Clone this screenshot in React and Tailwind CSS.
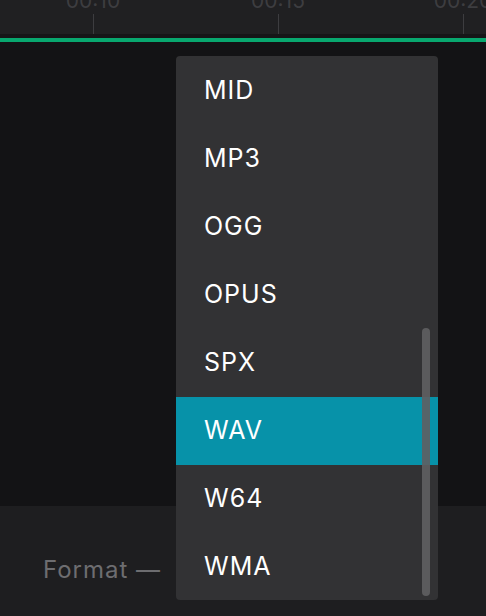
import React from "react";

const items = ["MID", "MP3", "OGG", "OPUS", "SPX", "WAV", "W64", "WMA"];

function Tick({ x, label }) {
  return (
    <>
      <span
        className="absolute top-[-10px] w-[80px] text-center text-[21px] leading-none text-[#3d3d40]"
        style={{ left: x - 40 }}
      >
        {label}
      </span>
      <div className="absolute top-[14px] w-[1px] h-[20px] bg-[#3d3d40]" style={{ left: x }} />
    </>
  );
}

export default function App() {
  return (
    <div
      className="relative w-[486px] h-[616px] overflow-hidden flex flex-col bg-[#131315]"
      style={{ fontFamily: "Inter, 'Noto Sans', sans-serif" }}
    >
      <div className="h-[34px] bg-[#202022] relative overflow-hidden">
        <Tick x={93} label="00:10" />
        <Tick x={278} label="00:15" />
        <Tick x={463} label="00:20" />
      </div>
      <div className="h-[4px] bg-[#161618]" />
      <div className="h-[4px] bg-[#08a86f]" />
      <div className="flex-1 bg-[#131315]" />
      <div className="h-[110px] bg-[#1e1e20] flex items-center pl-[43px] pt-[18px]">
        <span className="text-[24px] tracking-[1px] text-[#6d6d70]">Format —</span>
      </div>

      <div className="absolute left-[176px] top-[56px] w-[262px] h-[544px] bg-[#323234] rounded-[4px] overflow-hidden">
        <div className="pt-[1px]">
          {items.map((it) => (
            <div
              key={it}
              className={
                "h-[68px] flex items-center pl-[28px] text-[25px] tracking-[1px] text-white " +
                (it === "WAV" ? "bg-[#0792a9]" : "")
              }
            >
              {it}
            </div>
          ))}
        </div>
        <div className="absolute left-[246px] top-[272px] w-[8px] h-[268px] rounded-full bg-[#5f5f62] opacity-90" />
      </div>
    </div>
  );
}
